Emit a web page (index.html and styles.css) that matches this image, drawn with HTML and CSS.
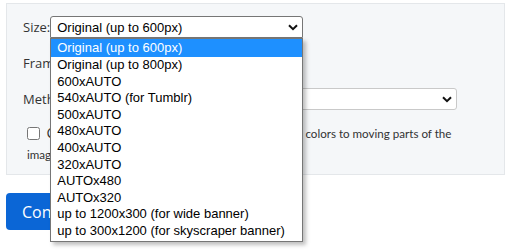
FILE: index.html
```html
<!DOCTYPE html>
<html lang="en">
<head>
    <meta charset="UTF-8">
    <meta name="viewport" content="width=device-width, initial-scale=1.0">
    <title>Video to GIF</title>
    <link rel="stylesheet" href="styles.css">
</head>
<body>
    <form class="options">
        <div class="panel">
            <div class="row">
                <label>Size:</label>
                <div class="select-wrap">
                    <div class="fake-select size-select open">
                        <span>Original (up to 600px)</span>
                        <svg class="chevron" width="10" height="7" viewBox="0 0 10 7"><path d="M1 1.2 L5 5.2 L9 1.2" fill="none" stroke="#111" stroke-width="2"/></svg>
                    </div>
                    <ul class="dropdown">
                        <li class="selected">Original (up to 600px)</li>
                        <li>Original (up to 800px)</li>
                        <li>600xAUTO</li>
                        <li>540xAUTO (for Tumblr)</li>
                        <li>500xAUTO</li>
                        <li>480xAUTO</li>
                        <li>400xAUTO</li>
                        <li>320xAUTO</li>
                        <li>AUTOx480</li>
                        <li>AUTOx320</li>
                        <li>up to 1200x300 (for wide banner)</li>
                        <li>up to 300x1200 (for skyscraper banner)</li>
                    </ul>
                </div>
            </div>
            <div class="row">
                <label>Frame rate (FPS):</label>
                <div class="fake-select fps-select">
                    <span>10 (max 30s)</span>
                </div>
            </div>
            <div class="row">
                <label>Method:</label>
                <div class="fake-select method-select">
                    <span>FFMPEG (default)</span>
                    <svg class="chevron" width="10" height="7" viewBox="0 0 10 7"><path d="M1 1.2 L5 5.2 L9 1.2" fill="none" stroke="#111" stroke-width="2"/></svg>
                </div>
            </div>
            <div class="check-row">
                <input type="checkbox" id="static">
                <label for="static">Compress static background</label>
                <small><span class="lead">(assign more</span> colors to moving parts of the image)</small>
            </div>
        </div>
        <button type="submit" class="convert">Convert to GIF!</button>
    </form>
</body>
</html>
```

FILE: styles.css
```css
/* page */
body {
    margin: 0;
    padding: 3px 8px 0 6px;
    min-height: 247px;
    font-family: "Open Sans", Arial, sans-serif;
    font-size: 13px;
    color: #333;
    background: #fff;
}

.panel {
    background-color: #f5f7f9;
    border: 1px solid #e4e7ea;
    padding: 12px 15px 9px 16px;
}

.row {
    display: flex;
    align-items: center;
    height: 22px;
    margin-bottom: 14px;
}

.select-wrap {
    position: relative;
}

.fake-select {
    box-sizing: border-box;
    height: 22px;
    display: flex;
    align-items: center;
    justify-content: space-between;
    padding: 0 4px 0 6px;
    background: #fff;
    border: 1px solid #c9c9c9;
    border-radius: 3px;
    font-family: "Liberation Sans", Arial, sans-serif;
    font-size: 13px;
    color: #000;
}

.size-select {
    width: 253px;
    border-color: #767676;
    border-radius: 3px 3px 0 0;
}

.fps-select {
    width: 150px;
    margin-left: 4px;
}

.method-select {
    flex: 1;
    margin-left: 50px;
    margin-right: 32px;
}

.chevron {
    display: block;
}

/* open list of the size select */
.dropdown {
    position: absolute;
    top: 22px;
    left: 0;
    width: 253px;
    box-sizing: border-box;
    margin: 0;
    padding: 0 0 1px 0;
    list-style: none;
    background: #fff;
    border: 1px solid #767676;
    box-shadow: 3px 3px 4px rgba(0, 0, 0, 0.25);
    font-family: "Liberation Sans", Arial, sans-serif;
    font-size: 13px;
    color: #000;
    z-index: 5;
}

.dropdown li {
    padding-left: 6px;
    line-height: 16.6px;
    white-space: nowrap;
}

.dropdown li.selected {
    background-color: #1e90ff;
    color: #fff;
    line-height: 18px;
}

.check-row {
    line-height: 20px;
    padding: 0 25px 0 4px;
    margin-top: -1px;
}

.check-row input {
    width: 13px;
    height: 13px;
    margin: 0 3px 0 0;
    vertical-align: -2px;
}

.check-row label {
    font-size: 14px;
}

.check-row small {
    font-family: Lato, "Open Sans", sans-serif;
    font-size: 11.6px;
    color: #333;
}

.check-row .lead {
    margin-right: 4px;
}

.convert {
    margin-top: 18px;
    height: 37px;
    padding: 0 16px;
    border: none;
    border-radius: 4px;
    background-color: #0b66d6;
    color: #fff;
    font-family: "Open Sans", Arial, sans-serif;
    font-size: 16px;
    cursor: pointer;
}
```
